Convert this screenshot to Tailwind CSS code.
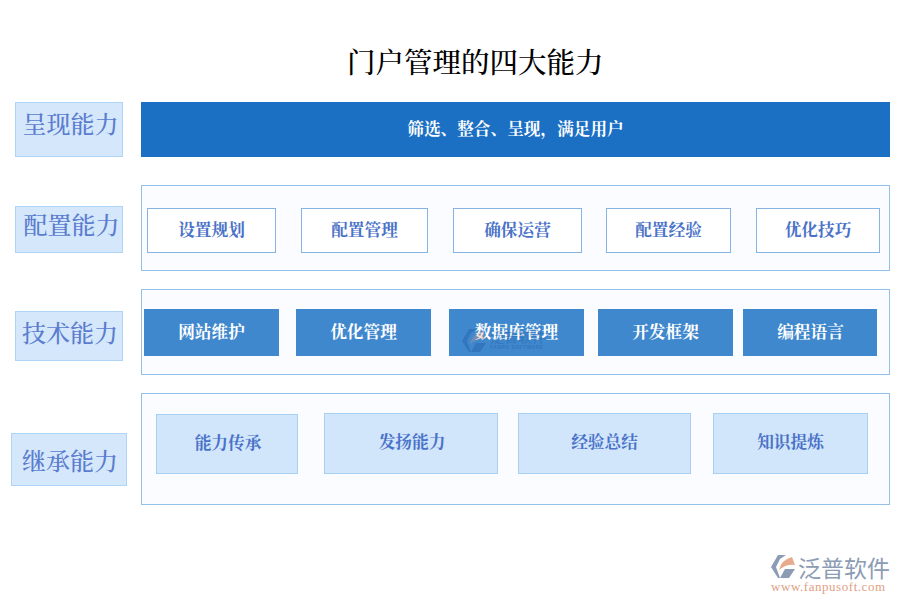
<!DOCTYPE html>
<html lang="zh"><head><meta charset="utf-8"><script src="https://cdn.jsdelivr.net/npm/@tailwindcss/browser@4"></script></head>
<body class="bg-white">
<div class="relative w-[900px] h-[600px] overflow-hidden bg-white font-['Noto_Serif_CJK_SC','Liberation_Serif','Noto_Sans_CJK_SC',serif]">
  <div class="h-[102px] pt-[43px] pl-[347px] text-[28.5px] leading-[36px] font-medium text-black">门户管理的四大能力</div>

  <div class="flex h-[55px]">
    <div class="ml-[15px] w-[108px] h-[55px] flex items-center justify-center pb-[13px] pl-[3px] bg-[#d5e8fb] border border-[#aed4f7] text-[24px] font-medium text-[#5b7ccf]">呈现能力</div>
    <div class="ml-[18px] w-[749px] flex items-center justify-center pb-[2px] bg-[#1b70c4] text-white font-bold text-[16.67px]">筛选、整合、呈现，满足用户</div>
  </div>

  <div class="flex h-[86px] mt-[28px]">
    <div class="ml-[15px] mt-[21px] w-[108px] h-[47px] flex items-center justify-center pb-[11px] pl-[5px] bg-[#d5e8fb] border border-[#aed4f7] text-[24px] font-medium text-[#5b7ccf]">配置能力</div>
    <div class="ml-[18px] w-[749px] flex items-start pt-[22px] bg-[#fbfcff] border border-[#95c0e8] text-[16.67px] font-bold text-[#4a72c8]">
      <div class="ml-[5px] w-[129px] h-[45px] flex items-center justify-center pb-[2px] bg-white border border-[#85b4e4]">设置规划</div>
      <div class="ml-[25px] w-[127px] h-[45px] flex items-center justify-center pb-[2px] bg-white border border-[#85b4e4]">配置管理</div>
      <div class="ml-[25px] w-[129px] h-[45px] flex items-center justify-center pb-[2px] bg-white border border-[#85b4e4]">确保运营</div>
      <div class="ml-[24px] w-[125px] h-[45px] flex items-center justify-center pb-[2px] bg-white border border-[#85b4e4]">配置经验</div>
      <div class="ml-[25px] w-[124px] h-[45px] flex items-center justify-center pb-[2px] bg-white border border-[#85b4e4]">优化技巧</div>
    </div>
  </div>

  <div class="flex h-[86px] mt-[18px]">
    <div class="ml-[15px] mt-[22px] w-[108px] h-[50px] flex items-center justify-center pb-[9px] pl-[2px] bg-[#d5e8fb] border border-[#aed4f7] text-[24px] font-medium text-[#5b7ccf]">技术能力</div>
    <div class="ml-[18px] w-[749px] flex items-start pt-[19px] bg-[#fbfcff] border border-[#95c0e8] text-[16.67px] font-bold text-white">
      <div class="ml-[2px] w-[135px] h-[47px] flex items-center justify-center pb-[3px] bg-[#3f88cd]">网站维护</div>
      <div class="ml-[17px] w-[135px] h-[47px] flex items-center justify-center pb-[3px] bg-[#3f88cd]">优化管理</div>
      <div class="ml-[18px] w-[135px] h-[47px] flex items-center justify-center pb-[3px] bg-[#3f88cd]">数据库管理</div>
      <div class="ml-[14px] w-[135px] h-[47px] flex items-center justify-center pb-[3px] bg-[#3f88cd]">开发框架</div>
      <div class="ml-[10px] w-[134px] h-[47px] flex items-center justify-center pb-[3px] pl-[1px] bg-[#3f88cd]">编程语言</div>
    </div>
  </div>

  <div class="flex h-[112px] mt-[18px]">
    <div class="ml-[11px] mt-[40px] w-[116px] h-[53px] flex items-center justify-center pl-[2px] bg-[#d5e8fb] border border-[#aed4f7] text-[24px] font-medium text-[#5b7ccf]">继承能力</div>
    <div class="ml-[14px] w-[749px] flex items-start pt-[19px] bg-[#fbfcff] border border-[#95c0e8] text-[16.67px] font-bold text-[#4a72c8]">
      <div class="ml-[14px] mt-[1px] w-[142px] h-[60px] flex items-center justify-center pb-[4px] pl-[2px] bg-[#d1e6fb] border border-[#a8d0f3]">能力传承</div>
      <div class="ml-[26px] w-[174px] h-[61px] flex items-center justify-center pb-[4px] pl-[2px] bg-[#d1e6fb] border border-[#a8d0f3]">发扬能力</div>
      <div class="ml-[20px] w-[173px] h-[61px] flex items-center justify-center pb-[4px] bg-[#d1e6fb] border border-[#a8d0f3]">经验总结</div>
      <div class="ml-[22px] w-[155px] h-[61px] flex items-center justify-center pb-[4px] bg-[#d1e6fb] border border-[#a8d0f3]">知识提炼</div>
    </div>
  </div>

  <div class="absolute left-[462px] top-[329px] flex items-start gap-[4px] opacity-30 pointer-events-none">
    <svg width="24" height="24" viewBox="0 0 24 24"><path d="M7 0H15L9 4 5 12 9 23H7L0 12Z" fill="#1b4f9c"/><path d="M8 15Q10 5 21 2L24 10Q15 9 8 15Z" fill="#e59a7c"/><path d="M9 23L14 14H24L18 23Z" fill="#1b4f9c"/></svg>
    <div class="flex flex-col font-['Noto_Sans_CJK_SC',sans-serif] text-[#1b4f9c]"><span class="text-[14px] leading-[15px]">泛普软件</span><span class="font-['Liberation_Sans',sans-serif] text-[5px] leading-[7px] font-bold tracking-[0.5px]">FANPU SOFTWARE</span></div>
  </div>

  <div class="absolute left-[771px] top-[554px] w-[120px] pointer-events-none">
    <div class="flex items-center gap-[3px] h-[26px]">
      <svg width="24" height="24" viewBox="0 0 24 24"><path d="M7 0H15L9 4 5 12 9 23H7L0 12Z" fill="#8b9cb4"/><path d="M8 15Q10 5 21 2L24 10Q15 9 8 15Z" fill="#e8aa8c"/><path d="M9 23L14 14H24L18 23Z" fill="#8b9cb4"/></svg>
      <span class="font-['Noto_Sans_CJK_SC',sans-serif] text-[23px] leading-[24px] text-[#8b9cb4]">泛普软件</span>
    </div>
    <div class="font-['Liberation_Serif',serif] text-[13px] leading-[14px] tracking-[0.55px] text-[#e0a084] whitespace-nowrap">www.fanpusoft.com</div>
  </div>
</div>
</body></html>
